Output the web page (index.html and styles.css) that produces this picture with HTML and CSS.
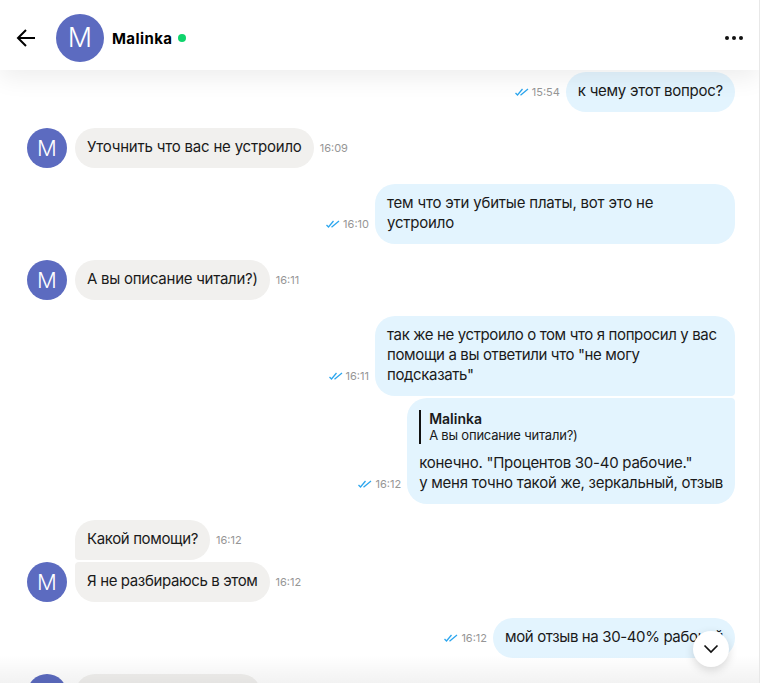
FILE: index.html
```html
<!DOCTYPE html>
<html lang="ru">
<head>
    <meta charset="UTF-8">
    <meta name="viewport" content="width=device-width, initial-scale=1.0">
    <title>Malinka</title>
    <link rel="stylesheet" href="styles.css">
</head>
<body>
    <div class="chat">
        <header class="chat-header">
            <svg class="back-icon" width="24" height="24" viewBox="0 0 24 24" fill="none" stroke="#000" stroke-width="2"><path d="M21 12H4.5M12 4l-8 8 8 8"/></svg>
            <div class="avatar avatar-big">M</div>
            <div class="chat-name">Malinka</div>
            <span class="online-dot"></span>
            <div class="more-dots"><span></span><span></span><span></span></div>
        </header>

        <div class="messages">
            <div class="group group-mine">
                <div class="row">
                    <svg class="ticks" width="14" height="8" viewBox="0 0 14 8" fill="none" stroke="#2ca6ee" stroke-width="1.3"><path d="M.5 5l2 2L7.5 1M5.5 7.2L13 1"/></svg>
                    <span class="time">15:54</span>
                    <div class="bubble bubble-mine tight">к чему этот вопрос?</div>
                </div>
            </div>

            <div class="group group-theirs">
                <div class="row">
                    <div class="avatar">M</div>
                    <div class="bubble bubble-theirs">Уточнить что вас не устроило</div>
                    <span class="time">16:09</span>
                </div>
            </div>

            <div class="group group-mine">
                <div class="row">
                    <svg class="ticks" width="14" height="8" viewBox="0 0 14 8" fill="none" stroke="#2ca6ee" stroke-width="1.3"><path d="M.5 5l2 2L7.5 1M5.5 7.2L13 1"/></svg>
                    <span class="time">16:10</span>
                    <div class="bubble bubble-mine bubble-wide">тем что эти убитые платы, вот это не<br>устроило</div>
                </div>
            </div>

            <div class="group group-theirs">
                <div class="row">
                    <div class="avatar">M</div>
                    <div class="bubble bubble-theirs tight">А вы описание читали?)</div>
                    <span class="time">16:11</span>
                </div>
            </div>

            <div class="group group-mine">
                <div class="row">
                    <svg class="ticks" width="14" height="8" viewBox="0 0 14 8" fill="none" stroke="#2ca6ee" stroke-width="1.3"><path d="M.5 5l2 2L7.5 1M5.5 7.2L13 1"/></svg>
                    <span class="time">16:11</span>
                    <div class="bubble bubble-mine first-in-group bubble-wide tighter">так же не устроило о том что я попросил у вас<br>помощи а вы ответили что "не могу<br>подсказать"</div>
                </div>
                <div class="row">
                    <svg class="ticks" width="14" height="8" viewBox="0 0 14 8" fill="none" stroke="#2ca6ee" stroke-width="1.3"><path d="M.5 5l2 2L7.5 1M5.5 7.2L13 1"/></svg>
                    <span class="time">16:12</span>
                    <div class="bubble bubble-mine last-in-group tight">
                        <div class="reply">
                            <div class="reply-name">Malinka</div>
                            <div class="reply-text">А вы описание читали?)</div>
                        </div>
                        конечно. "Процентов 30-40 рабочие."<br>у меня точно такой же, зеркальный, отзыв
                    </div>
                </div>
            </div>

            <div class="group group-theirs">
                <div class="row">
                    <div class="avatar avatar-empty"></div>
                    <div class="bubble bubble-theirs first-in-group tighter">Какой помощи?</div>
                    <span class="time">16:12</span>
                </div>
                <div class="row">
                    <div class="avatar">M</div>
                    <div class="bubble bubble-theirs last-in-group tighter">Я не разбираюсь в этом</div>
                    <span class="time">16:12</span>
                </div>
            </div>

            <div class="group group-mine">
                <div class="row">
                    <svg class="ticks" width="14" height="8" viewBox="0 0 14 8" fill="none" stroke="#2ca6ee" stroke-width="1.3"><path d="M.5 5l2 2L7.5 1M5.5 7.2L13 1"/></svg>
                    <span class="time">16:12</span>
                    <div class="bubble bubble-mine tighter">мой отзыв на 30-40% рабочий</div>
                </div>
            </div>

            <div class="group group-theirs">
                <div class="row">
                    <div class="avatar">M</div>
                    <div class="bubble bubble-theirs bubble-cut">&nbsp;</div>
                </div>
            </div>
        </div>

        <div class="bottom-fade"></div>
        <button class="scroll-btn">
            <svg width="16" height="10" viewBox="0 0 16 10" fill="none" stroke="#111" stroke-width="1.7"><path d="M1.5 1.5L8 8l6.5-6.5"/></svg>
        </button>
    </div>
</body>
</html>
```

FILE: styles.css
```css
body {
    margin: 0;
    background: #fff;
    font-family: 'Inter', 'Noto Sans', sans-serif;
    color: #1a1a1a;
    overflow: hidden;
}
.chat {
    position: relative;
    width: 759px;
    height: 683px;
    overflow: hidden;
    border-right: 1px solid #e8e8e8;
    display: flex;
    flex-direction: column;
}
.chat-header {
    position: relative;
    z-index: 2;
    flex: none;
    height: 70px;
    box-sizing: border-box;
    display: flex;
    align-items: center;
    padding: 6px 14px 0;
    background: #fff;
    box-shadow: 0 8px 24px rgba(0, 0, 0, 0.07);
}
.back-icon { margin-right: 18px; }
.avatar {
    flex: none;
    width: 40px;
    height: 40px;
    border-radius: 50%;
    background: #5c6bc0;
    color: #fff;
    font-size: 22px;
    font-weight: 300;
    line-height: 40px;
    text-align: center;
}
.avatar-big {
    width: 48px;
    height: 48px;
    line-height: 48px;
    font-size: 27px;
    margin-right: 8px;
}
.avatar-empty { background: none; }
.chat-name {
    font-size: 15px;
    font-weight: 700;
    letter-spacing: 0.4px;
    color: #000;
}
.online-dot {
    width: 8px;
    height: 8px;
    border-radius: 50%;
    background: #0fd46c;
    margin-left: 6px;
}
.more-dots {
    margin-left: auto;
    margin-right: 2px;
    display: flex;
    gap: 3px;
}
.more-dots span {
    width: 4px;
    height: 4px;
    border-radius: 50%;
    background: #111;
}
.messages {
    flex: 1;
    padding: 2px 24px 0 27px;
    display: flex;
    flex-direction: column;
    gap: 16px;
}
.group {
    display: flex;
    flex-direction: column;
    gap: 2px;
}
.row {
    display: flex;
    align-items: flex-end;
}
.group-mine .row { justify-content: flex-end; }
.bubble {
    padding: 9px 12px 11px;
    font-size: 15px;
    line-height: 20px;
    letter-spacing: -0.2px;
    border-radius: 20px;
}
.bubble-mine { background: #e3f4fe; }
.bubble-theirs {
    background: #f1f0ee;
    margin-left: 8px;
}
.bubble-wide { width: 360px; box-sizing: border-box; }
.bubble-cut { width: 186px; box-sizing: border-box; }
.tight { letter-spacing: -0.26px; }
.tighter { letter-spacing: -0.37px; }
.group-mine .first-in-group { border-bottom-right-radius: 4px; }
.group-mine .last-in-group { border-top-right-radius: 4px; }
.group-theirs .first-in-group { border-bottom-left-radius: 4px; }
.group-theirs .last-in-group { border-top-left-radius: 4px; }
.time {
    font-size: 11px;
    line-height: 14px;
    color: #969696;
    margin-bottom: 13px;
}
.group-mine .time { margin-right: 6px; margin-left: 3px; }
.group-theirs .time { margin-left: 6px; }
.ticks { margin-bottom: 16px; }
.reply {
    border-left: 2px solid #111;
    padding-left: 8px;
    margin: 3px 0 9px;
}
.reply-name {
    font-size: 14px;
    font-weight: 600;
    line-height: 17px;
    letter-spacing: 0;
}
.reply-text {
    font-size: 13px;
    line-height: 17px;
    letter-spacing: -0.2px;
}
.bottom-fade {
    position: absolute;
    left: 0;
    right: 0;
    bottom: 0;
    height: 28px;
    background: linear-gradient(rgba(0, 0, 0, 0), rgba(0, 0, 0, 0.05));
}
.scroll-btn {
    position: absolute;
    left: 693px;
    top: 631px;
    width: 36px;
    height: 36px;
    padding: 0;
    border: none;
    border-radius: 50%;
    background: #fff;
    box-shadow: 0 3px 10px rgba(0, 0, 0, 0.15);
    display: flex;
    align-items: center;
    justify-content: center;
}
```
